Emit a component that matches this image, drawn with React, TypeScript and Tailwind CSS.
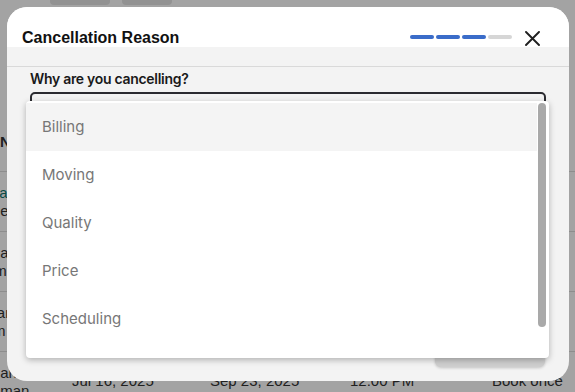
const REASONS = ["Billing", "Moving", "Quality", "Price", "Scheduling", "Other"];

const ROWS = [
  { name: ["Pearl", "Dee"], start: "Jun 02, 2025", end: "Aug 14, 2025", time: "9:00 AM", plan: "Weekly" },
  { name: ["Dean", "Kim"], start: "Jun 20, 2025", end: "Sep 01, 2025", time: "10:30 AM", plan: "Biweekly" },
  { name: ["Jean", "Tim"], start: "Jul 01, 2025", end: "Sep 12, 2025", time: "2:00 PM", plan: "Weekly" },
  { name: ["Dean", "Roman"], start: "Jul 16, 2025", end: "Sep 23, 2025", time: "12:00 PM", plan: "Book once" },
];

function Background() {
  return (
    <div className="font-['Liberation_Sans',sans-serif] text-[15px] text-[#333]">
      <div className="flex h-[114px] gap-3 px-[50px]">
        <div className="h-[5px] w-[60px] rounded-b bg-[#e5e5e5]" />
        <div className="h-[5px] w-[50px] rounded-b bg-[#e5e5e5]" />
      </div>
      <div className="flex h-[58px] items-center border-b border-[#ddd] font-bold">
        <span className="w-[72px]">Name</span>
      </div>
      {ROWS.map((r, i) => (
        <div key={i} className="flex h-[60px] items-center border-b border-[#ddd]">
          <div className="-ml-[19px] w-[91px] leading-[18px]">
            <div className={i === 0 ? "text-[#0f766e]" : ""}>{r.name[0]}</div>
            <div>{r.name[1]}</div>
          </div>
          <span className="w-[138px]">{r.start}</span>
          <span className="w-[140px]">{r.end}</span>
          <span className="w-[142px]">{r.time}</span>
          <span>{r.plan}</span>
        </div>
      ))}
    </div>
  );
}

export default function App() {
  return (
    <div className="relative h-[392px] w-[575px] overflow-hidden bg-white">
      <Background />
      <div className="absolute inset-0 bg-black/[0.36] p-[7px]">
        <div className="flex h-[374px] w-[562px] flex-col overflow-hidden rounded-[20px] bg-[#f3f3f3]">
          <div className="flex h-[40px] items-start justify-between bg-white pl-[15px] pr-[29px] pt-[21px]">
            <h2 className="font-['Liberation_Sans',sans-serif] text-[16px] font-bold leading-[20px] text-[#111]">
              Cancellation Reason
            </h2>
            <div className="flex h-[20px] items-center gap-[13px]">
              <div className="flex gap-[2px] pb-[2px]">
                <span className="h-[4px] w-[24px] rounded-full bg-[#3a6cc9]" />
                <span className="h-[4px] w-[24px] rounded-full bg-[#3a6cc9]" />
                <span className="h-[4px] w-[24px] rounded-full bg-[#3a6cc9]" />
                <span className="h-[4px] w-[24px] rounded-full bg-[#d6d6d6]" />
              </div>
              <svg width="15" height="15" viewBox="0 0 15 15" className="text-[#1f1f1f]">
                <path d="M1 1L14 14M14 1L1 14" stroke="currentColor" strokeWidth="1.9" strokeLinecap="round" />
              </svg>
            </div>
          </div>
          <div className="h-[20px] border-b border-[#d9d9d9]" />
          <div className="flex-1 px-[23px] pt-[2px] font-['Inter',sans-serif]">
            <p className="text-[14px] font-semibold leading-[20px] tracking-[-0.3px] text-[#1a1a1a]">
              Why are you cancelling?
            </p>
            <div className="relative mt-[3px] h-[40px] rounded-[5px] border-2 border-[#2b2b30] bg-[#f3f3f3]">
              <div className="absolute left-[-6px] top-[7px] z-10 h-[257px] w-[523px] overflow-hidden rounded-[4px] bg-white pt-[2px] shadow-[0_2px_6px_rgba(0,0,0,0.28)]">
                <ul className="w-[511px]">
                  {REASONS.map((r, i) => (
                    <li
                      key={r}
                      className={`flex h-[48px] items-center pl-[16px] text-[15px] text-[#777] ${i === 0 ? "bg-[#f4f4f4]" : ""}`}
                    >
                      {r}
                    </li>
                  ))}
                </ul>
                <div className="absolute left-[512px] top-[2px] h-[224px] w-[8px] rounded-full bg-[#a9a9a9]" />
              </div>
            </div>
          </div>
          <div className="flex justify-end pb-[14px] pr-[24px]">
            <div className="h-[40px] w-[110px] rounded-[6px] bg-[#cfcfcf] shadow-[0_1px_3px_rgba(0,0,0,0.2)]" />
          </div>
        </div>
      </div>
    </div>
  );
}
